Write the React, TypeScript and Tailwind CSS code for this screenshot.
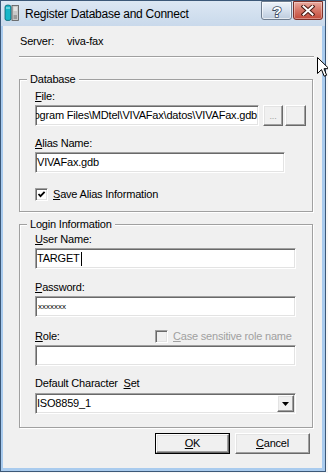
import React from "react";

const sunken =
  "border border-t-[#a0a0a0] border-l-[#a0a0a0] border-b-white border-r-white shadow-[inset_1px_1px_0_#696969,inset_-1px_-1px_0_#e3e3e3]";
const raised =
  "border border-t-white border-l-white border-b-[#696969] border-r-[#696969] shadow-[inset_-1px_-1px_0_#a0a0a0,inset_1px_1px_0_#e3e3e3] bg-[#f0f0f0]";
const group =
  "relative border border-[#a0a0a0] shadow-[1px_1px_0_#fff,inset_1px_1px_0_#fff]";

function U({ c }: { c: string }) {
  return <span className="underline underline-offset-[1px]">{c}</span>;
}

function Check({ checked, disabled }: { checked?: boolean; disabled?: boolean }) {
  return (
    <div
      className={
        "w-[13px] h-[13px] flex items-center justify-center " +
        sunken +
        (disabled ? " bg-[#f0f0f0]" : " bg-white")
      }
    >
      {checked && (
        <svg width="9" height="9" viewBox="0 0 9 9">
          <polyline points="1.5,4 3.5,6.2 7.6,1.8" fill="none" stroke="#000" strokeWidth="1.8" />
        </svg>
      )}
    </div>
  );
}

function TitleIcon() {
  return (
    <svg width="16" height="17" viewBox="0 0 16 17">
      <path d="M1 3 Q1 1 4 1 Q7 1 7 3 L7 15 Q7 16.5 4 16.5 Q1 16.5 1 15 Z" fill="#18b7c9" stroke="#0b5f6e" strokeWidth="0.8" />
      <path d="M2 4 L6 4" stroke="#b8f1f7" strokeWidth="1" />
      <rect x="8" y="1.5" width="6.5" height="15" fill="#c9c9c9" stroke="#555" strokeWidth="0.8" />
      <path d="M9.5 4 H13 M9.5 6 H13" stroke="#fff" strokeWidth="1" />
      <rect x="9.5" y="11" width="3.5" height="4" fill="#9a9a9a" />
    </svg>
  );
}

function Cursor() {
  return (
    <svg width="13" height="21" viewBox="0 0 13 21" className="absolute left-[317px] top-[57px]">
      <path
        d="M0.5 0.5 L0.5 16.5 L4.5 12.6 L7.2 19.2 L9.6 18.2 L7 11.7 L12 11.7 Z"
        fill="#fff"
        stroke="#000"
        strokeWidth="1"
        strokeLinejoin="miter"
      />
    </svg>
  );
}

export default function App() {
  return (
    <div className="relative w-[328px] h-[473px] overflow-hidden bg-[#f7f7f7] font-['Liberation_Sans',Arial,sans-serif] text-[11px] leading-[13px] tracking-[-0.2px] text-black">
      <div className="w-[326px] h-[472px] flex flex-col border border-[#3c5878] bg-[#a9cbee]">
        {/* title bar */}
        <div className="h-[25px] flex items-start pl-[3px] pr-[2px] bg-gradient-to-b from-[#dce7f3] to-[#c9d9eb]">
          <div className="mt-[3px]">
            <TitleIcon />
          </div>
          <div className="ml-[5px] mt-[6px] text-[12px] leading-[15px] tracking-[-0.25px]">Register Database and Connect</div>
          <div className="ml-auto flex gap-[1px]">
            <div className="w-[31px] h-[19px] rounded-b-[3px] border border-[#6d7c8e] bg-gradient-to-b from-[#eef3f9] via-[#d6e1ee] to-[#bccbdd] flex items-center justify-center shadow-[inset_0_0_0_1px_rgba(255,255,255,0.6)]">
              <svg width="14" height="16" viewBox="0 0 14 16">
                <text
                  x="7"
                  y="13.5"
                  textAnchor="middle"
                  fontFamily="Liberation Sans, Arial, sans-serif"
                  fontWeight="bold"
                  fontSize="15"
                  fill="#fff"
                  stroke="#3d4c60"
                  strokeWidth="1.6"
                  paintOrder="stroke"
                >
                  ?
                </text>
              </svg>
            </div>
            <div className="w-[30px] h-[19px] rounded-b-[3px] border border-[#7c3028] bg-gradient-to-b from-[#e9aaa0] via-[#d57465] to-[#c24a3a] flex items-center justify-center shadow-[inset_0_0_0_1px_rgba(255,255,255,0.35)]">
              <svg width="14" height="11" viewBox="0 0 14 11">
                <path d="M2.5 1.5 L11.5 9.5 M11.5 1.5 L2.5 9.5" stroke="#4a1a14" strokeWidth="4" strokeLinecap="square" />
                <path d="M2.5 1.5 L11.5 9.5 M11.5 1.5 L2.5 9.5" stroke="#fff" strokeWidth="2" strokeLinecap="square" />
              </svg>
            </div>
          </div>
        </div>

        {/* client area */}
        <div className="ml-[2px] mr-[3px] h-[442px] bg-[#f0f0f0] flex flex-col pl-[16px] pt-[9px]">
          {/* server row */}
          <div className="flex ml-[1px] h-[13px]">
            <div className="w-[47px]">Server:</div>
            <div>viva-fax</div>
          </div>
          <div className="mt-[8px] w-[295px] h-[2px] border-t border-t-[#a0a0a0] border-b border-b-white" />

          {/* Database group */}
          <div className={"mt-[21px] w-[294px] h-[133px] flex flex-col pl-[15px] pt-[10px] " + group}>
            <span className="absolute -top-[7px] left-[7px] px-[3px] bg-[#f0f0f0]">Database</span>
            <div>
              <U c="F" />
              ile:
            </div>
            <div className="mt-[2px] flex items-center">
              <div className={"w-[224px] h-[21px] bg-white flex justify-end items-center overflow-hidden whitespace-nowrap pr-[1px] pl-[2px] " + sunken}>
                <span>C:\Program Files\MDtel\VIVAFax\datos\VIVAFax.gdb</span>
              </div>
              <div className={"ml-[4px] w-[20px] h-[21px] flex items-center justify-center text-[#a0a0a0] text-[9px] " + raised}>
                <span className="mt-[2px]">...</span>
              </div>
              <div className={"ml-[2px] w-[21px] h-[21px] " + raised} />
            </div>
            <div className="mt-[11px]">
              <U c="A" />
              lias Name:
            </div>
            <div className={"mt-[2px] w-[250px] h-[21px] bg-white flex items-center pl-[1px] " + sunken}>
              VIVAFax.gdb
            </div>
            <div className="mt-[15px] flex items-center h-[13px]">
              <Check checked />
              <span className="ml-[5px]">
                <U c="S" />
                ave Alias Information
              </span>
            </div>
          </div>

          {/* Login group */}
          <div className={"mt-[12px] w-[294px] h-[204px] flex flex-col pl-[15px] pt-[8px] " + group}>
            <span className="absolute -top-[7px] left-[7px] px-[3px] bg-[#f0f0f0]">Login Information</span>
            <div>
              <U c="U" />
              ser Name:
            </div>
            <div className={"mt-[2px] w-[261px] h-[21px] bg-white flex items-center pl-[1px] " + sunken}>
              TARGET
              <span className="inline-block w-[1px] h-[14px] bg-black ml-[1px]" />
            </div>
            <div className="mt-[12px]">
              <U c="P" />
              assword:
            </div>
            <div className={"mt-[2px] w-[261px] h-[21px] bg-white flex items-center pl-[2px] text-[8px] leading-[8px] tracking-normal " + sunken}>
              xxxxxxx
            </div>
            <div className="mt-[13px] flex items-center h-[13px]">
              <div className="w-[120px]">
                <U c="R" />
                ole:
              </div>
              <Check disabled />
              <span className="ml-[5px] text-[#a0a0a0]">
                <U c="C" />
                ase sensitive role name
              </span>
            </div>
            <div className={"mt-[2px] w-[261px] h-[21px] bg-white " + sunken} />
            <div className="mt-[11px] whitespace-pre">
              {"Default Character  "}
              <U c="S" />
              et
            </div>
            <div className={"mt-[3px] w-[261px] h-[21px] bg-white flex items-center pl-[1px] pr-[1px] " + sunken}>
              <span>ISO8859_1</span>
              <div className={"ml-auto w-[17px] h-[17px] flex items-center justify-center " + raised}>
                <svg width="7" height="4" viewBox="0 0 7 4">
                  <path d="M0 0 H7 L3.5 4 Z" fill="#000" />
                </svg>
              </div>
            </div>
          </div>

          {/* buttons */}
          <div className="mt-[5px] flex justify-end gap-[5px] pr-[12px]">
            <div className="w-[75px] h-[21px] border border-black">
              <div className={"w-full h-full flex items-center justify-center " + raised}>
                <span>
                  <U c="O" />K
                </span>
              </div>
            </div>
            <div className={"w-[75px] h-[21px] flex items-center justify-center " + raised}>
              <span>
                <U c="C" />
                ancel
              </span>
            </div>
          </div>
        </div>
      </div>
      <Cursor />
    </div>
  );
}
